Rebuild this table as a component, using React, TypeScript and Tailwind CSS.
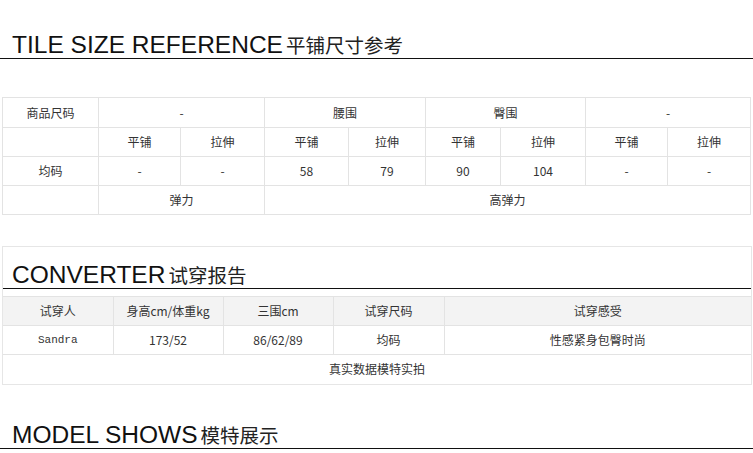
const cell = 'border border-[#e3e3e3] text-center align-middle font-normal';

function Heading({ en, zh, inset = false }: { en: string; zh: string; inset?: boolean }) {
  return (
    <div
      className={
        'flex items-baseline border-b-[1.5px] border-[#111] pb-[1px] ' + (inset ? 'pl-[9px]' : 'pl-3')
      }
    >
      <span className="text-[24.5px] leading-[25px] text-[#111] [font-family:'Liberation_Sans',Arial,sans-serif]">
        {en}
      </span>
      <span className="ml-[3px] text-[19.5px] leading-[25px] text-[#222] [font-family:'Noto_Sans_CJK_SC',sans-serif]">
        {zh}
      </span>
    </div>
  );
}

const sizeWidths = [96, 82, 84, 84, 77, 75, 85, 82, 83];

export default function App() {
  return (
    <div className="h-[453px] w-[753px] overflow-hidden bg-white text-[12px] text-[#333] [font-family:'Noto_Sans_CJK_SC',sans-serif]">
      {/* tile size reference */}
      <div className="pt-[32px]">
        <Heading en="TILE SIZE REFERENCE" zh="平铺尺寸参考" />
      </div>

      <table className="mt-[38px] ml-[2px] w-[748px] table-fixed border-collapse">
        <colgroup>
          {sizeWidths.map((w, i) => (
            <col key={i} style={{ width: w }} />
          ))}
        </colgroup>
        <tbody>
          <tr className="h-[30px]">
            <td className={cell}>商品尺码</td>
            <td className={cell} colSpan={2}>-</td>
            <td className={cell} colSpan={2}>腰围</td>
            <td className={cell} colSpan={2}>臀围</td>
            <td className={cell} colSpan={2}>-</td>
          </tr>
          <tr className="h-[29px]">
            <td className={cell}></td>
            {['平铺', '拉伸', '平铺', '拉伸', '平铺', '拉伸', '平铺', '拉伸'].map((t, i) => (
              <td key={i} className={cell}>{t}</td>
            ))}
          </tr>
          <tr className="h-[29px]">
            <td className={cell}>均码</td>
            {['-', '-', '58', '79', '90', '104', '-', '-'].map((t, i) => (
              <td key={i} className={cell}>{t}</td>
            ))}
          </tr>
          <tr className="h-[29px]">
            <td className={cell}></td>
            <td className={cell} colSpan={2}>弹力</td>
            <td className={cell} colSpan={6}>高弹力</td>
          </tr>
        </tbody>
      </table>

      {/* converter */}
      <div className="mt-[31px] ml-[2px] w-[750px] border border-[#e6e6e6]">
        <div className="pt-[15px]">
          <Heading en="CONVERTER" zh="试穿报告" inset />
        </div>
        <table className="mt-[7px] w-full table-fixed border-collapse">
          <colgroup>
            <col style={{ width: 110 }} />
            <col style={{ width: 110 }} />
            <col style={{ width: 110 }} />
            <col style={{ width: 111 }} />
            <col />
          </colgroup>
          <tbody>
            <tr className="h-[29px] bg-[#f3f3f3]">
              <td className={cell + ' border-l-0'}>试穿人</td>
              <td className={cell}>身高cm/体重kg</td>
              <td className={cell}>三围cm</td>
              <td className={cell}>试穿尺码</td>
              <td className={cell + ' border-r-0'}>试穿感受</td>
            </tr>
            <tr className="h-[29px]">
              <td className={cell + " border-l-0 [font-family:'Liberation_Mono',monospace] text-[11px]"}>Sandra</td>
              <td className={cell}>173/52</td>
              <td className={cell}>86/62/89</td>
              <td className={cell}>均码</td>
              <td className={cell + ' border-r-0'}>性感紧身包臀时尚</td>
            </tr>
            <tr className="h-[29px]">
              <td className={cell + ' border-x-0 border-b-0'} colSpan={5}>真实数据模特实拍</td>
            </tr>
          </tbody>
        </table>
      </div>

      {/* model shows */}
      <div className="pt-[37px]">
        <Heading en="MODEL SHOWS" zh="模特展示" />
      </div>
    </div>
  );
}
